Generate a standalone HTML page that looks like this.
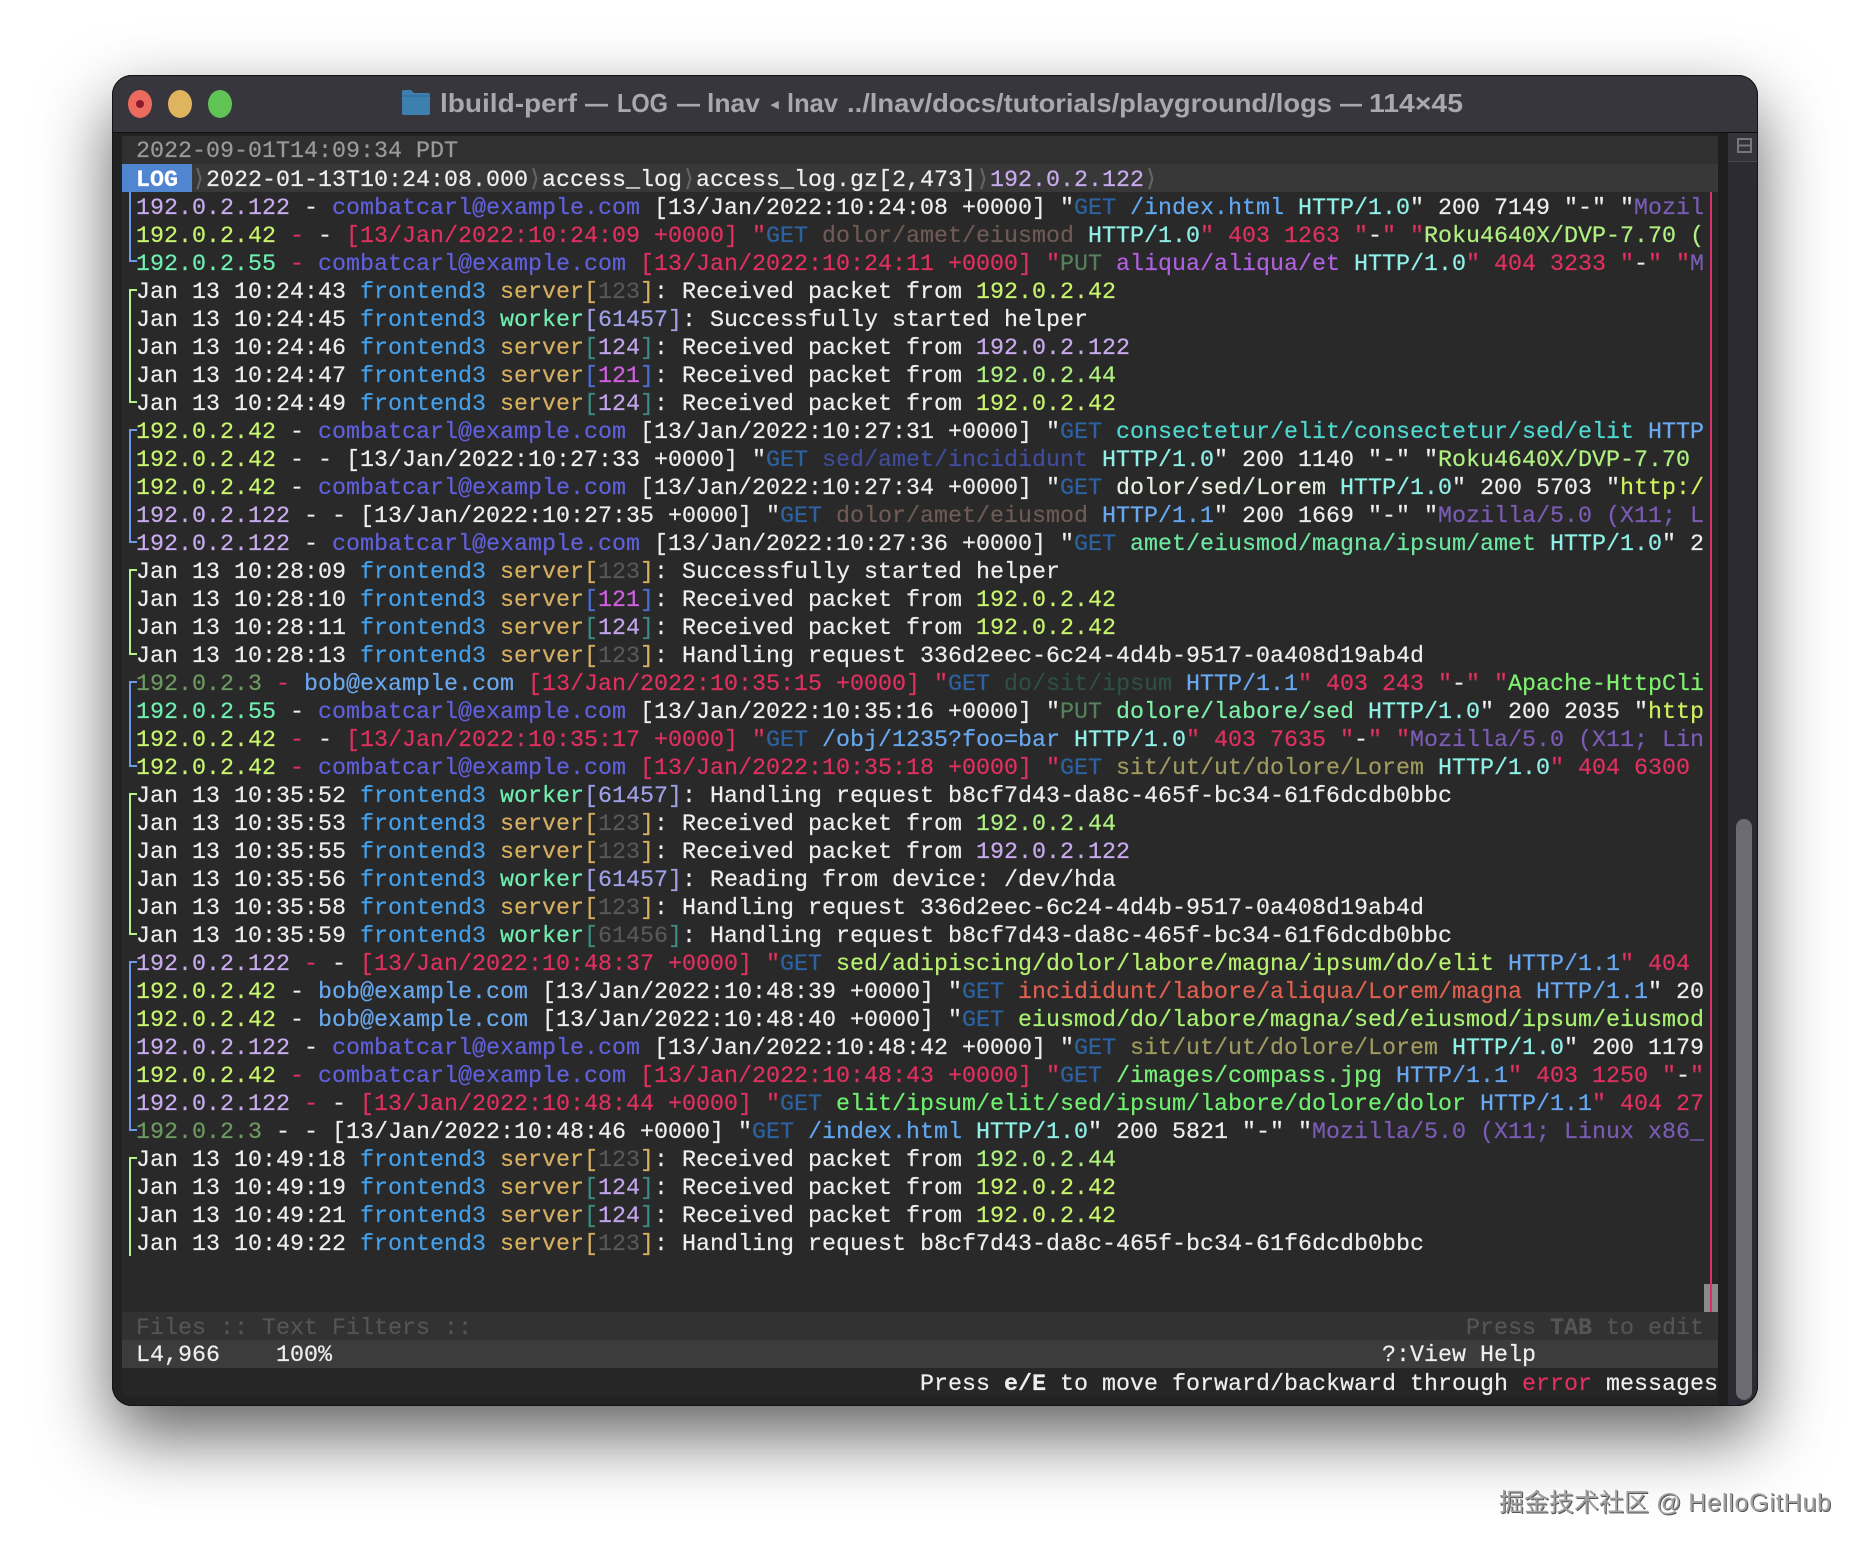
<!DOCTYPE html>
<html lang="en"><head><meta charset="utf-8"><title>lnav</title>
<style>
html,body{margin:0;padding:0;width:1870px;height:1554px;background:#fff;overflow:hidden}
.abs,.win,.win div{position:absolute}
.win{left:112px;top:75px;width:1646px;height:1331px;border-radius:20px;box-shadow:0 30px 70px rgba(0,0,0,.62);background:#222}
.clip{left:0;top:0;width:1646px;height:1331px;border-radius:20px;overflow:hidden;background:#222}
.frame{left:0;top:0;width:1644px;height:1329px;border-radius:20px;border:1px solid #141416;z-index:9}
.tb{left:0;top:0;width:1646px;height:57px;background:#37363c;border-bottom:1.5px solid #0e0e10}
.tl{width:24px;height:28px;border-radius:50%;top:15px}
.ttl{position:absolute;left:0;top:0;filter:blur(.3px)}
.ttl text{font:bold 25.6px "Liberation Sans",sans-serif;fill:#a9a8ae}
.mono{font-family:"Liberation Mono","DejaVu Sans Mono",monospace;font-size:23.33px;line-height:28px;color:#eee;filter:blur(.35px);-webkit-text-stroke:.2px}
.bar{left:122px;width:1596px;height:28px}
.t{position:absolute;left:136px;white-space:pre;margin-top:1px}
i{font-style:normal}
.a{color:#c9abef}.l{color:#c8f46e}.m{color:#70f0b0}.n{color:#aef080}.e{color:#6c9a60}
.cc{color:#6060dc}.bo{color:#6aa8ee}.r{color:#e0305f}.g{color:#2c62a0}.p{color:#54805a}
.h0{color:#8ff0e8}.h1{color:#68a8f0}.ua{color:#7a5cb4}
.f{color:#45a0ea}.s{color:#d6b060}.k{color:#70f0b0}.x{color:#585858}.y{color:#c4a4ec}.z{color:#d060e0}.v{color:#a0a0e8}.tq{color:#3c8a80}.bu{color:#4a70d8}.w{color:#555}
.p1{color:#60a8f2}.p2{color:#6f5a55}.p3{color:#b060e0}.p4{color:#50d8d0}.p5{color:#404c9c}.p6{color:#e8f0e0}.p7{color:#6ee8a0}.p8{color:#2f4f45}.p9{color:#7ff0a8}.p10{color:#a09a60}.p11{color:#b8f070}.p12{color:#e06050}.p13{color:#a8f070}.p14{color:#7af078}.p15{color:#70f070}
.ro{color:#b0f080}.ap{color:#80f070}.ht{color:#d0f060}
.ch{display:inline-block;width:14px;text-align:center;color:#666;font-family:"DejaVu Sans",sans-serif}
.rows{position:absolute;left:136px;top:195px;width:1568px;height:1117px;overflow:hidden}
.rows>span{display:block;height:28px;white-space:pre}
.br{width:6px;box-sizing:content-box;left:129px;border-left:2px solid}
.bl{border-color:#6a9ae8}.gn{border-color:#b5f08a}
</style></head><body>

<div class="win"><div class="clip">
<div class="tb"></div>
<div class="tl" style="left:16px;background:#ec6a5e"></div>
<div style="left:24px;top:25px;width:8px;height:8px;border-radius:50%;background:#8c1a30"></div>
<div class="tl" style="left:56px;background:#e0b35f"></div>
<div class="tl" style="left:96px;background:#5fc454"></div>
<svg class="abs" style="position:absolute;left:290px;top:14px" width="28" height="26" viewBox="0 0 28 26"><path d="M0 3q0-2 2-2h7l3 3h14q2 0 2 2v18q0 2-2 2H2q-2 0-2-2z" fill="#3d7fae"/><path d="M0 7h28" stroke="#2f6a95" stroke-width="1"/></svg>

<div style="left:1606px;top:58px;width:10px;height:1273px;background:#1e1e1e"></div>
<div style="left:1616px;top:58px;width:30px;height:1273px;background:#2c2b33"></div>
<div style="left:1616px;top:58px;width:30px;height:28px;background:#333339;border-bottom:1px solid #47474c"></div>
<svg style="position:absolute;left:1625px;top:63px" width="15" height="15" viewBox="0 0 15 15"><rect x="1" y="1" width="13" height="13" fill="none" stroke="#77767c" stroke-width="2"/><path d="M1 7.5h13" stroke="#77767c" stroke-width="2"/></svg>
<div style="left:1624px;top:744px;width:16px;height:581px;border-radius:8px;background:#6c6b72"></div>
<div style="left:10px;top:61px;width:1590px;height:1260px;background:#292929"></div>
<div style="left:1600px;top:117px;width:6px;height:1120px;background:#252525"></div>
</div><div class="frame"></div></div>

<svg class="ttl" width="1870" height="140" viewBox="0 0 1870 140">
<text x="440" y="112" textLength="137" lengthAdjust="spacingAndGlyphs">lbuild-perf</text>
<text x="585" y="112" textLength="23" lengthAdjust="spacingAndGlyphs">—</text>
<text x="617" y="112" textLength="51" lengthAdjust="spacingAndGlyphs">LOG</text>
<text x="677" y="112" textLength="23" lengthAdjust="spacingAndGlyphs">—</text>
<text x="707" y="112" textLength="53" lengthAdjust="spacingAndGlyphs">lnav</text>
<text x="771" y="109" style="font-size:15px">◂</text>
<text x="787" y="112" textLength="51" lengthAdjust="spacingAndGlyphs">lnav</text>
<text x="847" y="112" textLength="485" lengthAdjust="spacingAndGlyphs">../lnav/docs/tutorials/playground/logs</text>
<text x="1340" y="112" textLength="22" lengthAdjust="spacingAndGlyphs">—</text>
<text x="1369" y="112" textLength="94" lengthAdjust="spacingAndGlyphs">114×45</text>
</svg>

<div class="abs bar" style="position:absolute;top:136px;background:#303030"></div>
<div class="abs bar" style="position:absolute;top:164px;background:#383838"></div>
<div class="abs" style="position:absolute;left:122px;top:164px;width:70px;height:28px;background:#4f86cf"></div>
<div class="abs" style="position:absolute;left:1704px;top:1284px;width:14px;height:28px;background:#8a8a8a"></div>
<div class="abs" style="position:absolute;left:1710px;top:192px;width:2px;height:1120px;background:#d8306a"></div>
<div class="abs bar" style="position:absolute;top:1312px;background:#323232"></div>
<div class="abs bar" style="position:absolute;top:1340px;background:#3c3c3c"></div>
<div class="abs bar" style="position:absolute;top:1368px;background:#262626"></div>

<div class="abs br bl" style="position:absolute;top:192px;height:68px;border-bottom:2px solid #6a9ae8"></div>
<div class="abs br gn" style="position:absolute;top:289px;height:110px;border-top:2px solid #b5f08a;border-bottom:2px solid #b5f08a"></div>
<div class="abs br bl" style="position:absolute;top:429px;height:110px;border-top:2px solid #6a9ae8;border-bottom:2px solid #6a9ae8"></div>
<div class="abs br gn" style="position:absolute;top:569px;height:82px;border-top:2px solid #b5f08a;border-bottom:2px solid #b5f08a"></div>
<div class="abs br bl" style="position:absolute;top:681px;height:82px;border-top:2px solid #6a9ae8;border-bottom:2px solid #6a9ae8"></div>
<div class="abs br gn" style="position:absolute;top:793px;height:138px;border-top:2px solid #b5f08a;border-bottom:2px solid #b5f08a"></div>
<div class="abs br bl" style="position:absolute;top:961px;height:166px;border-top:2px solid #6a9ae8;border-bottom:2px solid #6a9ae8"></div>
<div class="abs br gn" style="position:absolute;top:1157px;height:97px;border-top:2px solid #b5f08a"></div>

<div class="mono abs" style="position:absolute;left:0;top:0;width:1870px;height:1554px;overflow:hidden">
<div class="t" style="top:137px;color:#9a9a9a">2022-09-01T14:09:34 PDT</div>
<div class="t" style="top:163px"><b style="color:#fff">LOG</b> <i class="ch">⟩</i>2022-01-13T10:24:08.000<i class="ch">⟩</i>access_log<i class="ch">⟩</i>access_log.gz[2,473]<i class="ch">⟩</i><i class="a">192.0.2.122</i><i class="ch">⟩</i></div>
<div class="rows">
<span><i class="a">192.0.2.122</i> - <i class="cc">combatcarl@example.com</i> [13/Jan/2022:10:24:08 +0000] "<i class="g">GET</i> <i class="p1">/index.html</i> <i class="h0">HTTP/1.0</i>" 200 7149 "-" "<i class="ua">Mozil</i></span>
<span><i class="l">192.0.2.42</i> <i class="r">-</i> - <i class="r">[13/Jan/2022:10:24:09 +0000] "</i><i class="g">GET</i> <i class="p2">dolor/amet/eiusmod</i> <i class="h0">HTTP/1.0</i><i class="r">" 403 1263 "</i>-<i class="r">" "</i><i class="ro">Roku4640X/DVP-7.70 (</i></span>
<span><i class="m">192.0.2.55</i> <i class="r">-</i> <i class="cc">combatcarl@example.com</i> <i class="r">[13/Jan/2022:10:24:11 +0000] "</i><i class="p">PUT</i> <i class="p3">aliqua/aliqua/et</i> <i class="h0">HTTP/1.0</i><i class="r">" 404 3233 "</i>-<i class="r">" "</i><i class="ua">M</i></span>
<span>Jan 13 10:24:43 <i class="f">frontend3</i> <i class="s">server[</i><i class="x">123</i><i class="s">]</i>: Received packet from <i class="l">192.0.2.42</i></span>
<span>Jan 13 10:24:45 <i class="f">frontend3</i> <i class="k">worker</i><i class="v">[61457]</i>: Successfully started helper</span>
<span>Jan 13 10:24:46 <i class="f">frontend3</i> <i class="s">server</i><i class="tq">[</i><i class="y">124</i><i class="tq">]</i>: Received packet from <i class="a">192.0.2.122</i></span>
<span>Jan 13 10:24:47 <i class="f">frontend3</i> <i class="s">server</i><i class="bu">[</i><i class="z">121</i><i class="bu">]</i>: Received packet from <i class="n">192.0.2.44</i></span>
<span>Jan 13 10:24:49 <i class="f">frontend3</i> <i class="s">server</i><i class="tq">[</i><i class="y">124</i><i class="tq">]</i>: Received packet from <i class="l">192.0.2.42</i></span>
<span><i class="l">192.0.2.42</i> - <i class="cc">combatcarl@example.com</i> [13/Jan/2022:10:27:31 +0000] "<i class="g">GET</i> <i class="p4">consectetur/elit/consectetur/sed/elit</i> <i class="h1">HTTP</i></span>
<span><i class="l">192.0.2.42</i> - - [13/Jan/2022:10:27:33 +0000] "<i class="g">GET</i> <i class="p5">sed/amet/incididunt</i> <i class="h0">HTTP/1.0</i>" 200 1140 "-" "<i class="ro">Roku4640X/DVP-7.70</i></span>
<span><i class="l">192.0.2.42</i> - <i class="cc">combatcarl@example.com</i> [13/Jan/2022:10:27:34 +0000] "<i class="g">GET</i> <i class="p6">dolor/sed/Lorem</i> <i class="h0">HTTP/1.0</i>" 200 5703 "<i class="ht">http:/</i></span>
<span><i class="a">192.0.2.122</i> - - [13/Jan/2022:10:27:35 +0000] "<i class="g">GET</i> <i class="p2">dolor/amet/eiusmod</i> <i class="h1">HTTP/1.1</i>" 200 1669 "-" "<i class="ua">Mozilla/5.0 (X11; L</i></span>
<span><i class="a">192.0.2.122</i> - <i class="cc">combatcarl@example.com</i> [13/Jan/2022:10:27:36 +0000] "<i class="g">GET</i> <i class="p7">amet/eiusmod/magna/ipsum/amet</i> <i class="h0">HTTP/1.0</i>" 2</span>
<span>Jan 13 10:28:09 <i class="f">frontend3</i> <i class="s">server[</i><i class="x">123</i><i class="s">]</i>: Successfully started helper</span>
<span>Jan 13 10:28:10 <i class="f">frontend3</i> <i class="s">server</i><i class="bu">[</i><i class="z">121</i><i class="bu">]</i>: Received packet from <i class="l">192.0.2.42</i></span>
<span>Jan 13 10:28:11 <i class="f">frontend3</i> <i class="s">server</i><i class="tq">[</i><i class="y">124</i><i class="tq">]</i>: Received packet from <i class="l">192.0.2.42</i></span>
<span>Jan 13 10:28:13 <i class="f">frontend3</i> <i class="s">server[</i><i class="x">123</i><i class="s">]</i>: Handling request 336d2eec-6c24-4d4b-9517-0a408d19ab4d</span>
<span><i class="e">192.0.2.3</i> <i class="r">-</i> <i class="bo">bob@example.com</i> <i class="r">[13/Jan/2022:10:35:15 +0000] "</i><i class="g">GET</i> <i class="p8">do/sit/ipsum</i> <i class="h1">HTTP/1.1</i><i class="r">" 403 243 "</i>-<i class="r">" "</i><i class="ap">Apache-HttpCli</i></span>
<span><i class="m">192.0.2.55</i> - <i class="cc">combatcarl@example.com</i> [13/Jan/2022:10:35:16 +0000] "<i class="p">PUT</i> <i class="p9">dolore/labore/sed</i> <i class="h0">HTTP/1.0</i>" 200 2035 "<i class="ht">http</i></span>
<span><i class="l">192.0.2.42</i> <i class="r">-</i> - <i class="r">[13/Jan/2022:10:35:17 +0000] "</i><i class="g">GET</i> <i class="h1">/obj/1235?foo=bar</i> <i class="h0">HTTP/1.0</i><i class="r">" 403 7635 "</i>-<i class="r">" "</i><i class="ua">Mozilla/5.0 (X11; Lin</i></span>
<span><i class="l">192.0.2.42</i> <i class="r">-</i> <i class="cc">combatcarl@example.com</i> <i class="r">[13/Jan/2022:10:35:18 +0000] "</i><i class="g">GET</i> <i class="p10">sit/ut/ut/dolore/Lorem</i> <i class="h0">HTTP/1.0</i><i class="r">" 404 6300</i></span>
<span>Jan 13 10:35:52 <i class="f">frontend3</i> <i class="k">worker</i><i class="v">[61457]</i>: Handling request b8cf7d43-da8c-465f-bc34-61f6dcdb0bbc</span>
<span>Jan 13 10:35:53 <i class="f">frontend3</i> <i class="s">server[</i><i class="x">123</i><i class="s">]</i>: Received packet from <i class="n">192.0.2.44</i></span>
<span>Jan 13 10:35:55 <i class="f">frontend3</i> <i class="s">server[</i><i class="x">123</i><i class="s">]</i>: Received packet from <i class="a">192.0.2.122</i></span>
<span>Jan 13 10:35:56 <i class="f">frontend3</i> <i class="k">worker</i><i class="v">[61457]</i>: Reading from device: /dev/hda</span>
<span>Jan 13 10:35:58 <i class="f">frontend3</i> <i class="s">server[</i><i class="x">123</i><i class="s">]</i>: Handling request 336d2eec-6c24-4d4b-9517-0a408d19ab4d</span>
<span>Jan 13 10:35:59 <i class="f">frontend3</i> <i class="k">worker</i><i class="tq">[</i><i class="x">61456</i><i class="tq">]</i>: Handling request b8cf7d43-da8c-465f-bc34-61f6dcdb0bbc</span>
<span><i class="a">192.0.2.122</i> <i class="r">-</i> - <i class="r">[13/Jan/2022:10:48:37 +0000] "</i><i class="g">GET</i> <i class="p11">sed/adipiscing/dolor/labore/magna/ipsum/do/elit</i> <i class="h1">HTTP/1.1</i><i class="r">" 404</i></span>
<span><i class="l">192.0.2.42</i> - <i class="bo">bob@example.com</i> [13/Jan/2022:10:48:39 +0000] "<i class="g">GET</i> <i class="p12">incididunt/labore/aliqua/Lorem/magna</i> <i class="h1">HTTP/1.1</i>" 20</span>
<span><i class="l">192.0.2.42</i> - <i class="bo">bob@example.com</i> [13/Jan/2022:10:48:40 +0000] "<i class="g">GET</i> <i class="p13">eiusmod/do/labore/magna/sed/eiusmod/ipsum/eiusmod</i></span>
<span><i class="a">192.0.2.122</i> - <i class="cc">combatcarl@example.com</i> [13/Jan/2022:10:48:42 +0000] "<i class="g">GET</i> <i class="p10">sit/ut/ut/dolore/Lorem</i> <i class="h0">HTTP/1.0</i>" 200 1179</span>
<span><i class="l">192.0.2.42</i> <i class="r">-</i> <i class="cc">combatcarl@example.com</i> <i class="r">[13/Jan/2022:10:48:43 +0000] "</i><i class="g">GET</i> <i class="p14">/images/compass.jpg</i> <i class="h1">HTTP/1.1</i><i class="r">" 403 1250 "</i>-<i class="r">"</i></span>
<span><i class="a">192.0.2.122</i> <i class="r">-</i> - <i class="r">[13/Jan/2022:10:48:44 +0000] "</i><i class="g">GET</i> <i class="p15">elit/ipsum/elit/sed/ipsum/labore/dolore/dolor</i> <i class="h1">HTTP/1.1</i><i class="r">" 404 27</i></span>
<span><i class="e">192.0.2.3</i> - - [13/Jan/2022:10:48:46 +0000] "<i class="g">GET</i> <i class="p1">/index.html</i> <i class="h0">HTTP/1.0</i>" 200 5821 "-" "<i class="ua">Mozilla/5.0 (X11; Linux x86_</i></span>
<span>Jan 13 10:49:18 <i class="f">frontend3</i> <i class="s">server[</i><i class="x">123</i><i class="s">]</i>: Received packet from <i class="n">192.0.2.44</i></span>
<span>Jan 13 10:49:19 <i class="f">frontend3</i> <i class="s">server</i><i class="tq">[</i><i class="y">124</i><i class="tq">]</i>: Received packet from <i class="l">192.0.2.42</i></span>
<span>Jan 13 10:49:21 <i class="f">frontend3</i> <i class="s">server</i><i class="tq">[</i><i class="y">124</i><i class="tq">]</i>: Received packet from <i class="l">192.0.2.42</i></span>
<span>Jan 13 10:49:22 <i class="f">frontend3</i> <i class="s">server[</i><i class="x">123</i><i class="s">]</i>: Handling request b8cf7d43-da8c-465f-bc34-61f6dcdb0bbc</span>
</div>
<div class="t w" style="top:1314px">Files :: Text Filters ::</div>
<div class="t w" style="top:1314px;left:1466px">Press <b>TAB</b> to edit</div>
<div class="t" style="top:1341px">L4,966    100%</div>
<div class="t" style="top:1341px;left:1382px">?:View Help</div>
<div class="t" style="top:1370px;left:920px">Press <b>e/E</b> to move forward/backward through <i class="r">error</i> messages</div>
</div>

<div style="position:absolute;left:1499px;top:1487px;font:25px/32px 'Liberation Sans','Noto Sans CJK SC',sans-serif;color:#a2a2a2;text-shadow:1px 1px 0 #555;white-space:pre">掘金技术社区 @ <span style="letter-spacing:.8px">HelloGitHub</span></div>
</body></html>
